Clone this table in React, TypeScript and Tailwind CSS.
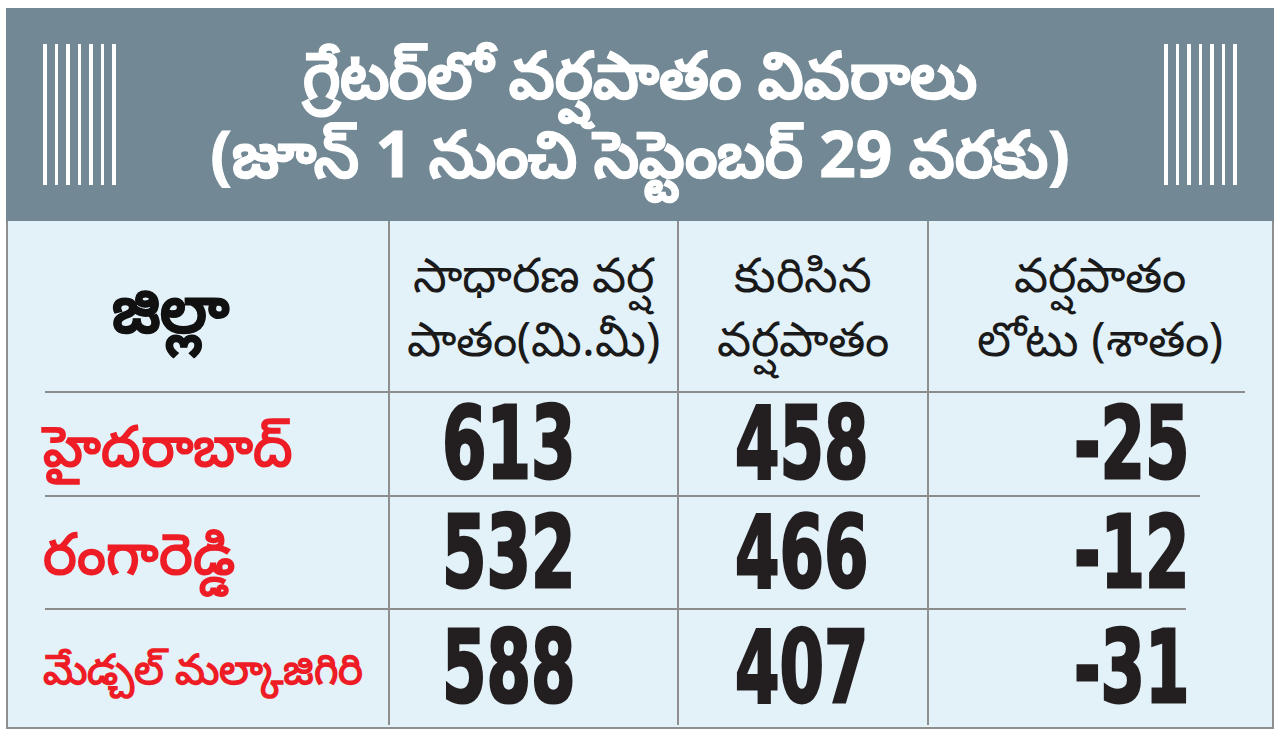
const rows = [
  { name: "హైదరాబాద్", size: "text-[56px]", normal: "613", actual: "458", deficit: "-25", lineEnd: "mr-[71px]" },
  { name: "రంగారెడ్డి", size: "text-[57px]", normal: "532", actual: "466", deficit: "-12", lineEnd: "mr-[85px]" },
  { name: "మేడ్చల్ మల్కాజిగిరి", size: "text-[42px]", normal: "588", actual: "407", deficit: "-31", lineEnd: "" },
];

function Stripes() {
  return (
    <div className="flex gap-[8px] h-[141px]">
      {[0, 1, 2, 3, 4, 5, 6].map((i) => (
        <div key={i} className="w-[3.5px] h-full bg-white" />
      ))}
    </div>
  );
}

// condensed heavy figures, squeezed from DejaVu Sans Bold
const num =
  "inline-block origin-left scale-x-[0.64] text-[100px] leading-none font-bold text-[#231f20] [font-family:'DejaVu_Sans',sans-serif] [-webkit-text-stroke:3px_#231f20]";

export default function App() {
  return (
    <div className="w-[1280px] h-[740px] bg-white pt-[8px] px-[6px] [font-family:'Noto_Sans','DejaVu_Sans',sans-serif]">
      {/* title band */}
      <div className="h-[213px] bg-[#728995] flex items-center justify-between px-[37px]">
        <Stripes />
        <div className="flex flex-col items-center text-white font-bold text-[64px] leading-[79px] -mt-[4px] [-webkit-text-stroke:1px_white]">
          <div>గ్రేటర్‌లో వర్షపాతం వివరాలు</div>
          <div>(జూన్ 1 నుంచి సెప్టెంబర్ 29 వరకు)</div>
        </div>
        <Stripes />
      </div>

      {/* table */}
      <div className="grid grid-cols-[380px_289px_250px_344px] bg-[#e3f1f9] border-x-2 border-b-2 border-[#8f8f8f] h-[508px] grid-rows-[172px_104px_113px_115px]">
        {/* head row */}
        <div className="flex flex-col">
          <div className="flex-1 flex items-center justify-center pr-[56px] text-[66px] font-bold text-[#111] [-webkit-text-stroke:1px_#111]">జిల్లా</div>
          <div className="h-[2px] bg-[#8c8c8c] ml-[37px]" />
        </div>
        <div className="flex flex-col border-l-2 border-[#8f8f8f]">
          <div className="flex-1 flex flex-col items-center justify-center text-[48px] leading-[64px] text-[#1a1a1a]">
            <div>సాధారణ వర్ష</div>
            <div>పాతం(మి.మీ)</div>
          </div>
          <div className="h-[2px] bg-[#8c8c8c]" />
        </div>
        <div className="flex flex-col border-l-2 border-[#8f8f8f]">
          <div className="flex-1 flex flex-col items-center justify-center text-[48px] leading-[64px] text-[#1a1a1a]">
            <div>కురిసిన</div>
            <div>వర్షపాతం</div>
          </div>
          <div className="h-[2px] bg-[#8c8c8c]" />
        </div>
        <div className="flex flex-col border-l-2 border-[#8f8f8f]">
          <div className="flex-1 flex flex-col items-center justify-center text-[48px] leading-[64px] text-[#1a1a1a]">
            <div>వర్షపాతం</div>
            <div>లోటు (శాతం)</div>
          </div>
          <div className="h-[2px] bg-[#8c8c8c] mr-[26px]" />
        </div>

        {rows.map((r, i) => (
          <div key={r.name} className="contents">
            <div className="flex flex-col">
              <div className={`flex-1 flex items-center pl-[35px] ${r.size} font-bold text-[#ee1c25] whitespace-nowrap`}>
                {r.name}
              </div>
              {i < 2 && <div className="h-[2px] bg-[#8c8c8c] ml-[37px]" />}
            </div>
            <div className="flex flex-col border-l-2 border-[#8f8f8f]">
              <div className="flex-1 flex items-center pl-[52px]">
                <span className={num}>{r.normal}</span>
              </div>
              {i < 2 && <div className="h-[2px] bg-[#8c8c8c]" />}
            </div>
            <div className="flex flex-col border-l-2 border-[#8f8f8f]">
              <div className="flex-1 flex items-center pl-[56px]">
                <span className={num}>{r.actual}</span>
              </div>
              {i < 2 && <div className="h-[2px] bg-[#8c8c8c]" />}
            </div>
            <div className="flex flex-col border-l-2 border-[#8f8f8f]">
              <div className="flex-1 flex items-center pl-[145px]">
                <span className={num}>{r.deficit}</span>
              </div>
              {i < 2 && <div className={`h-[2px] bg-[#8c8c8c] ${r.lineEnd}`} />}
            </div>
          </div>
        ))}
      </div>
    </div>
  );
}
